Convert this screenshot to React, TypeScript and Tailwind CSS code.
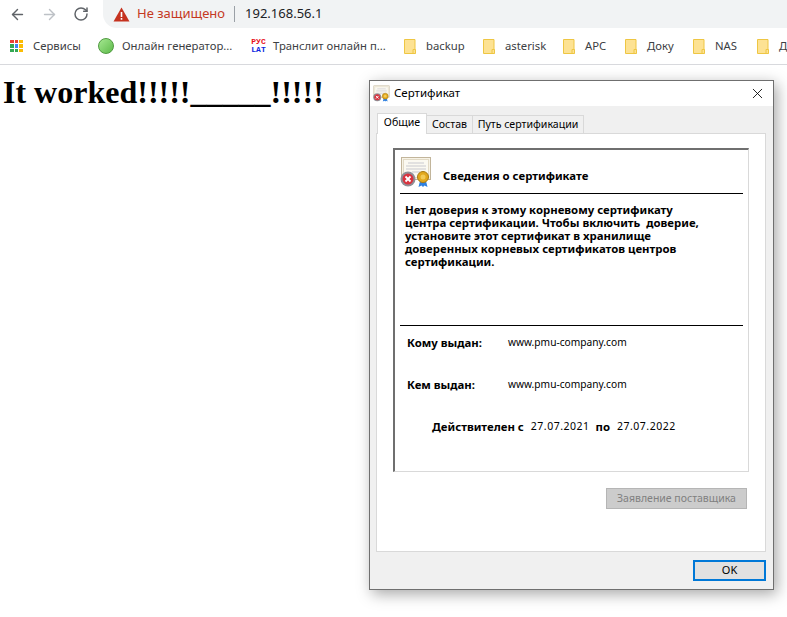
import { ArrowLeft, ArrowRight, RotateCw, X } from "lucide-react";

const folders = [
  { label: "backup", width: "w-[79px]" },
  { label: "asterisk", width: "w-[80px]" },
  { label: "APC", width: "w-[62px]" },
  { label: "Доку", width: "w-[68px]" },
  { label: "NAS", width: "w-[64px]" },
  { label: "Д", width: "w-[40px]" },
];

function FolderIcon() {
  return (
    <svg width="12" height="15" viewBox="0 0 12 15" className="shrink-0">
      <path d="M.5.5h10.5v14H.5z" fill="#fde293" stroke="#eec643" />
      <path d="M9 10.500h2.500v4H9z" fill="#fde293" stroke="#eec643" />
    </svg>
  );
}

function AppsIcon() {
  const colors = ["#ea4335", "#ea4335", "#fbbc04", "#34a853", "#4285f4", "#fbbc04", "#34a853", "#34a853", "#fbbc04"];
  return (
    <div className="grid h-[13px] w-[13px] shrink-0 grid-cols-3 gap-px">
      {colors.map((c, i) => (
        <span key={i} className="h-[3.6px] w-[3.6px]" style={{ backgroundColor: c }} />
      ))}
    </div>
  );
}

function CertIcon({ size }: { size: number }) {
  return (
    <svg width={size} height={size} viewBox="0 0 32 32" className="shrink-0">
      <rect x="1.500" y="1.500" width="29" height="22" fill="#f7f3e6" stroke="#c2b59b" />
      <rect x="3.500" y="3.500" width="25" height="18" fill="#fbf9f1" stroke="#e2dac6" />
      <path d="M8 7h16M6 10h20M6 13h20M12 16h8" stroke="#c9c9cf" strokeWidth="1" />
      <path d="M20 25l-1.500 6 3-1.500 1.500 1.500 1.500-1.500 3 1.500-1.500-6z" fill="#2f80e0" />
      <circle cx="23" cy="21" r="5.500" fill="#e2a81e" stroke="#a87a10" />
      <circle cx="23" cy="21" r="2.500" fill="#f2cb58" />
      <circle cx="8" cy="23" r="7.500" fill="#8f8f96" />
      <circle cx="8" cy="23" r="5.500" fill="#d9343f" />
      <path d="M5.500 20.500l5 5M10.500 20.500l-5 5" stroke="#fff" strokeWidth="1.800" />
    </svg>
  );
}

export default function App() {
  return (
    <div className="relative h-[617px] w-[787px] overflow-hidden bg-white font-['Noto_Sans',sans-serif]">
      {/* Browser toolbar */}
      <div className="flex h-[28px] items-center">
        <div className="flex w-[103px] items-center pl-[9px] text-[#5f6368]">
          <ArrowLeft size={17} strokeWidth={2} />
          <ArrowRight size={17} strokeWidth={2} className="ml-[15px] text-[#bdc1c6]" />
          <RotateCw size={16} strokeWidth={2.2} className="ml-[15px]" />
        </div>
        <div className="flex h-full flex-1 items-center rounded-bl-[14px] bg-[#f1f3f4] pl-[10px]">
          <svg width="17" height="15" viewBox="0 0 17 15">
            <path d="M8.500.5L16.500 14.500H.5z" fill="#c5321f" />
            <path d="M7.700 5h1.600v5H7.700zM7.700 11h1.600v1.700H7.700z" fill="#fff" />
          </svg>
          <span className="ml-[7px] text-[13px] text-[#c5391f]">Не защищено</span>
          <span className="ml-[9px] h-[16px] w-px bg-[#9aa0a6]" />
          <span className="ml-[10px] text-[13px] text-[#202124]">192.168.56.1</span>
        </div>
      </div>

      {/* Bookmarks */}
      <div className="flex h-[37px] items-center border-b border-[#d8d9dd] pl-[10px] text-[11.3px] text-[#3c4043]">
        <div className="flex w-[88px] shrink-0 items-center">
          <AppsIcon />
          <span className="ml-[10px]">Сервисы</span>
        </div>
        <div className="flex w-[152px] shrink-0 items-center">
          <span className="h-[16px] w-[16px] shrink-0 rounded-full border border-[#4f9a3f] bg-gradient-to-br from-[#a5e890] to-[#5dbb4a]" />
          <span className="ml-[8px]">Онлайн генератор...</span>
        </div>
        <div className="flex w-[154px] shrink-0 items-center">
          <span className="w-[17px] shrink-0 text-center font-['Liberation_Mono',monospace] text-[8px] leading-[8px] font-bold">
            <span className="block text-[#e8101a]">РУС</span>
            <span className="block text-[#1028e0]">LAT</span>
          </span>
          <span className="ml-[6px]">Транслит онлайн п...</span>
        </div>
        {folders.map((f) => (
          <div key={f.label} className={`flex items-center ${f.width} shrink-0`}>
            <FolderIcon />
            <span className="ml-[10px]">{f.label}</span>
          </div>
        ))}
      </div>

      {/* Page body */}
      <h1 className="mt-[9px] pl-[3px] font-['Liberation_Serif',serif] text-[32px] leading-[37px] font-bold text-black">
        It worked!!!!!_____!!!!!
      </h1>

      {/* Certificate dialog */}
      <div className="absolute top-[80px] left-[369px] flex h-[510px] w-[405px] flex-col border border-[#6f6f6f] bg-[#f0f0f0] shadow-[3px_4px_14px_rgba(0,0,0,0.35)]">
        <div className="flex h-[25px] shrink-0 items-center bg-white pl-[3px]">
          <CertIcon size={17} />
          <span className="mb-[2px] ml-[4px] text-[11.5px] text-black">Сертификат</span>
          <X size={17} strokeWidth={1.2} className="mr-[7px] ml-auto text-black" />
        </div>

        {/* Tabs */}
        <div className="flex h-[27px] shrink-0 items-end pl-[7px] text-[10.6px] text-black">
          <div className="z-10 -mb-px flex h-[21px] w-[50px] items-center justify-center border border-b-0 border-[#d9d9d9] bg-white pb-[2px]">
            Общие
          </div>
          <div className="flex h-[18px] w-[46px] items-center justify-center border border-l-0 border-b-0 border-[#d9d9d9]">
            Состав
          </div>
          <div className="flex h-[18px] w-[111px] items-center justify-center border border-l-0 border-b-0 border-[#d9d9d9]">
            Путь сертификации
          </div>
        </div>

        <div className="ml-[6px] flex h-[419px] w-[390px] shrink-0 flex-col border border-[#d9d9d9] bg-white pt-[14px] pl-[16px]">
          {/* Certificate info box */}
          <div className="flex h-[324px] w-[356px] flex-col border-t-2 border-r border-b border-l-2 border-t-[#6f6f6f] border-r-[#d9d9d9] border-b-[#d9d9d9] border-l-[#6f6f6f] pl-[5px] text-[11.4px] text-black">
            <div className="mr-[5px] flex h-[44px] shrink-0 items-end border-b border-black pb-[5px]">
              <CertIcon size={32} />
              <span className="mb-[4px] ml-[11px] font-bold">Сведения о сертификате</span>
            </div>
            <div className="mr-[5px] h-[132px] shrink-0 border-b border-black pt-[9px] pl-[5px] leading-[13px] font-bold">
              <p>Нет доверия к этому корневому сертификату</p>
              <p>центра сертификации. Чтобы включить&nbsp; доверие,</p>
              <p>установите этот сертификат в хранилище</p>
              <p>доверенных корневых сертификатов центров</p>
              <p>сертификации.</p>
            </div>
            <div className="mt-[9px] flex h-[15px] items-center pl-[7px]">
              <span className="w-[101px] font-bold">Кому выдан:</span>
              <span className="text-[10.2px]">www.pmu-company.com</span>
            </div>
            <div className="mt-[27px] flex h-[15px] items-center pl-[7px]">
              <span className="w-[101px] font-bold">Кем выдан:</span>
              <span className="text-[10.2px]">www.pmu-company.com</span>
            </div>
            <div className="mt-[27px] flex h-[15px] items-center pl-[32px]">
              <span className="font-bold">Действителен с</span>
              <span className="ml-[7px] text-[10.5px] tracking-[0.5px]">27.07.2021</span>
              <span className="ml-[6px] font-bold">по</span>
              <span className="ml-[7px] text-[10.5px] tracking-[0.5px]">27.07.2022</span>
            </div>
          </div>
          <div className="mt-[16px] flex w-[354px] justify-end">
            <button className="flex h-[21px] w-[141px] items-center justify-center border border-[#b5b5b5] bg-[#cccccc] text-[10.5px] text-[#808080]">
              Заявление поставщика
            </button>
          </div>
        </div>

        <div className="flex flex-1 items-center justify-end pr-[7px]">
          <button className="flex h-[21px] w-[73px] items-center justify-center border-2 border-[#0078d7] bg-[#e1e1e1] text-[11px] text-black">
            OK
          </button>
        </div>
      </div>
    </div>
  );
}
